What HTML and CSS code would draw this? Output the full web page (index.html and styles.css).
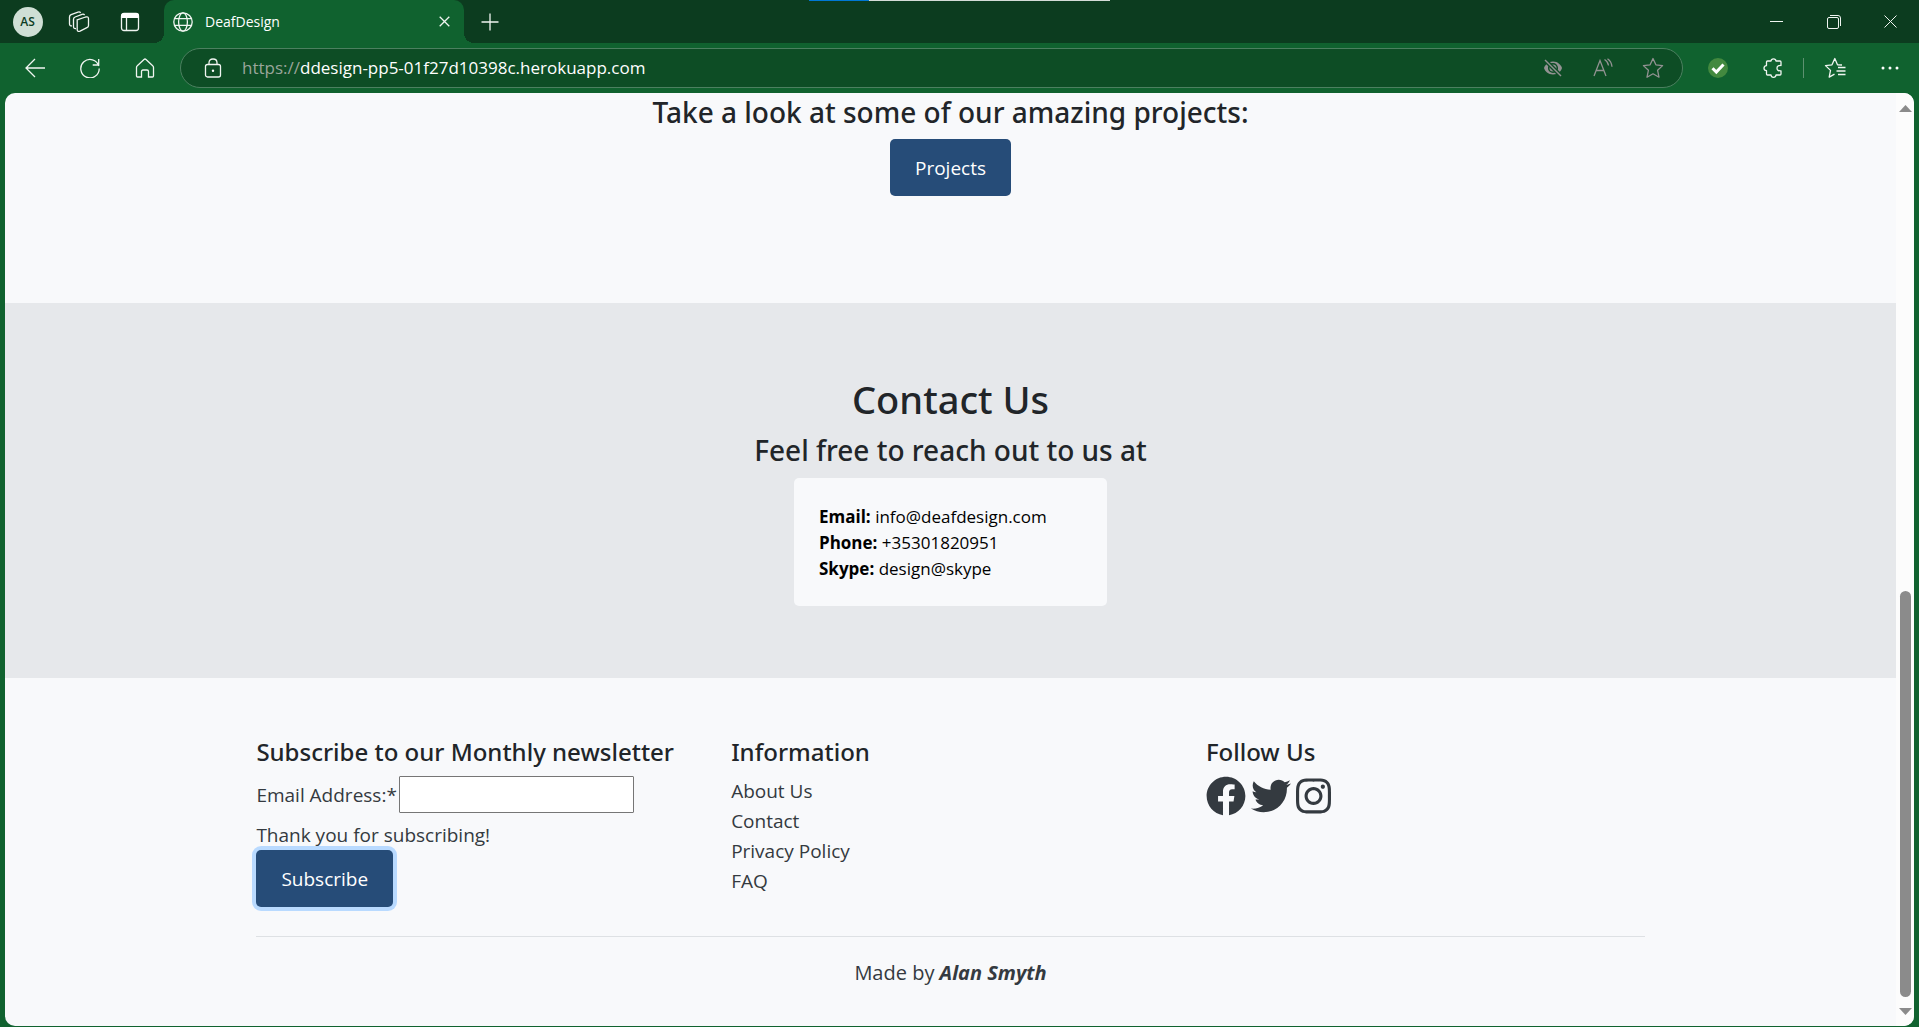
FILE: index.html
```html
<!DOCTYPE html>
<html lang="en">
<head>
<meta charset="utf-8">
<meta name="viewport" content="width=device-width, initial-scale=1">
<title>DeafDesign</title>
<link rel="stylesheet" href="styles.css">
</head>
<body>
<header class="browser">
  <div class="titlebar">
    <button class="tool" type="button" aria-label="Profile"><span class="avatar">AS</span></button>
    <button class="tool" type="button" aria-label="Workspaces">
      <svg class="icon" width="22" height="22" viewBox="0 0 22 22"><path d="M9.2 8.8 17.6 6q2.9-.8 2.9 1.8v6.600q0 1.600-1.600 2.200l-6.800 3.500q-2.900 1.100-2.900-1.500z"/><path d="M8 17.500q-2.500.4-2.500-2V8.300q0-1.700 1.600-2.300L14 3.300q1.800-.6 2.600.8"/><path d="M4 14.800Q1.500 15 1.500 12.800V6q0-1.700 1.600-2.300L10 1.100q1.800-.6 2.600.8"/></svg>
    </button>
    <button class="tool" type="button" aria-label="Tab actions">
      <svg class="icon" width="20" height="20" viewBox="0 0 20 20"><rect x="1.500" y="1.500" width="17" height="17" rx="2.500"/><path class="solid" d="M1 6V4q0-3 3-3h12q3 0 3 3v2z"/><path d="M6.500 6v12"/></svg>
    </button>
    <div class="tab">
      <svg class="icon" width="20" height="20" viewBox="0 0 20 20"><circle cx="10" cy="10" r="9.200"/><ellipse cx="10" cy="10" rx="4.400" ry="9.200"/><path d="M1.500 6.700h17M1.500 13.300h17"/></svg>
      <span class="tab-title">DeafDesign</span>
      <button class="bare" type="button" aria-label="Close tab"><svg class="icon" width="11" height="11" viewBox="0 0 11 11"><path d="m.7.7 9.600 9.600M10.300.7.7 10.300"/></svg></button>
    </div>
    <button class="tool" type="button" aria-label="New tab"><svg class="icon" width="18" height="18" viewBox="0 0 18 18"><path d="M9 .5v17M.5 9h17"/></svg></button>
    <div class="window-controls">
      <button type="button" aria-label="Minimize"><svg class="icon thin" width="13" height="13" viewBox="0 0 13 13"><path d="M0 6.500h13"/></svg></button>
      <button type="button" aria-label="Restore"><svg class="icon thin" width="14" height="14" viewBox="0 0 14 14"><rect x=".5" y="2.500" width="11" height="11" rx="1.500"/><path d="M3 .5h8q2.500 0 2.500 2.500v8"/></svg></button>
      <button type="button" aria-label="Close"><svg class="icon thin" width="13" height="13" viewBox="0 0 13 13"><path d="m.5.5 12 12M12.500.5l-12 12"/></svg></button>
    </div>
    <div class="progress"></div>
  </div>
  <div class="toolbar">
    <button class="nav" type="button" aria-label="Back"><svg class="icon" width="20" height="20" viewBox="0 0 20 20"><path d="M20 10H1M10 1 1 10l9 9"/></svg></button>
    <button class="nav" type="button" aria-label="Refresh"><svg class="icon" width="20" height="20" viewBox="0 0 20 20"><path d="M18.800 8A9.200 9.200 0 1 0 19.200 10.500M18.700 1v6h-6"/></svg></button>
    <button class="nav" type="button" aria-label="Home"><svg class="icon" width="20" height="20" viewBox="0 0 20 20"><path d="M1.500 9.500q0-1 .8-1.700L9 1.500q1-.9 2 0l6.700 6.300q.8.700.8 1.700V18q0 1-1 1h-4v-5.500q0-1.500-1.500-1.500h-4q-1.500 0-1.500 1.500V19h-4q-1 0-1-1z"/></svg></button>
    <div class="address">
      <svg class="icon" width="18" height="20" viewBox="0 0 18 20"><rect x="1.500" y="6.500" width="15" height="12.500" rx="2"/><path d="M5 6.500V4.800Q5 1 9 1t4 3.800v1.700"/><circle class="solid" cx="9" cy="12.800" r="1.200"/></svg>
      <label class="scheme" for="url">https://</label>
      <input id="url" type="text" value="ddesign-pp5-01f27d10398c.herokuapp.com">
      <button type="button" aria-label="Tracking prevention"><svg width="20" height="20" viewBox="0 0 20 20"><path fill="#929292" d="M10 3.500c5 0 8 3.500 9 6.500-1 3.500-4 6.500-9 6.500S2 13.500 1 10c1-3 4-6.500 9-6.500z"/><circle cx="10" cy="10" r="4.300" fill="none" stroke="#0d4d25" stroke-width="1.500"/><path stroke="#0d4d25" stroke-width="4" d="m2 2 16 16"/><path stroke="#929292" stroke-width="1.500" d="m2 2 16 16"/></svg></button>
      <button type="button" aria-label="Read aloud"><svg class="icon dim" width="20" height="20" viewBox="0 0 20 20"><path d="M1 18 7 2.500 13 18M3 12.500h8M11.500 1.500q3.500 2 4 6M14.500.8q4 2.600 4.500 8"/></svg></button>
      <button type="button" aria-label="Add to favorites"><svg class="icon dim" width="22" height="22" viewBox="0 0 22 22"><path stroke-linejoin="round" d="m11 1.500 2.900 6.300 6.700.8-5 4.700 1.400 6.900-6-3.400-6 3.400 1.400-6.900-5-4.700 6.700-.8z"/></svg></button>
    </div>
    <button class="nav" type="button" aria-label="Extension"><svg width="20" height="20" viewBox="0 0 20 20"><circle cx="10" cy="10" r="10" fill="#43893f"/><path fill="none" stroke="#fff" stroke-width="3" d="m4.500 10.300 3.800 3.800 7.200-7.700"/></svg></button>
    <button class="nav" type="button" aria-label="Extensions"><svg class="icon" width="20" height="20" viewBox="0 0 20 20"><path stroke-linejoin="round" d="M4.500 3H8Q8.200.8 10.500.8T13 3h4q1 0 1 1v3.500q-4-.3-4 2.700t4 2.700V16q0 1-1 1h-4q-.2 2.300-2.500 2.300T8 17H4.500q-1 0-1-1v-3.300Q1 12.500 1 10.200t2.500-2.600V4q0-1 1-1z"/></svg></button>
    <span class="divider"></span>
    <button class="nav" type="button" aria-label="Favorites"><svg class="icon" width="22" height="22" viewBox="0 0 22 22"><path stroke-linejoin="round" d="M18 8 13.500 7.800 10.800 1.500 8 7.800 1.500 8.600l5 4.800-1.300 6.700 5.300-3M14 10.500h7.500M12.500 14h9M14 17.500h7.500"/></svg></button>
    <button class="nav" type="button" aria-label="More"><svg width="18" height="4" viewBox="0 0 18 4" fill="#fff"><circle cx="2" cy="2" r="1.500"/><circle cx="9" cy="2" r="1.500"/><circle cx="16" cy="2" r="1.500"/></svg></button>
  </div>
</header>

<div class="viewport">
  <div class="page">
    <section class="projects">
      <h3>Take a look at some of our amazing projects:</h3>
      <button class="btn" type="button">Projects</button>
    </section>
    <section class="contact">
      <h1>Contact Us</h1>
      <h3>Feel free to reach out to us at</h3>
      <address class="card">
        <div><strong>Email:</strong> info@deafdesign.com</div>
        <div><strong>Phone:</strong> +35301820951</div>
        <div><strong>Skype:</strong> design@skype</div>
      </address>
    </section>
    <footer class="footer">
      <div class="columns">
        <form>
          <h4>Subscribe to our Monthly newsletter</h4>
          <div class="field"><label for="email">Email Address:*</label><input id="email" type="email"></div>
          <p>Thank you for subscribing!</p>
          <button class="btn focused" type="button">Subscribe</button>
        </form>
        <nav>
          <h4>Information</h4>
          <ul>
            <li><a href="#about">About Us</a></li>
            <li><a href="#contact">Contact</a></li>
            <li><a href="#privacy">Privacy Policy</a></li>
            <li><a href="#faq">FAQ</a></li>
          </ul>
        </nav>
        <div>
          <h4>Follow Us</h4>
          <div class="social">
            <a href="#facebook" aria-label="Facebook"><svg width="40" height="40" viewBox="0 0 512 512"><path d="M504 256C504 119 393 8 256 8S8 119 8 256c0 123.780 90.690 226.380 209.250 245V327.690h-63V256h63v-54.640c0-62.150 37-96.480 93.670-96.480 27.140 0 55.520 4.840 55.520 4.840v61h-31.280c-30.800 0-40.410 19.120-40.410 38.730V256h68.780l-11 71.690h-57.780V501C413.310 482.380 504 379.780 504 256z"/></svg></a>
            <a href="#twitter" aria-label="Twitter"><svg width="40" height="40" viewBox="0 0 512 512"><path d="M459.370 151.716c.325 4.548.325 9.097.325 13.645 0 138.720-105.583 298.558-298.558 298.558-59.452 0-114.680-17.219-161.137-47.106 8.447.974 16.568 1.299 25.340 1.299 49.055 0 94.213-16.568 130.274-44.832-46.132-.975-84.792-31.188-98.112-72.772 6.498.974 12.995 1.624 19.818 1.624 9.421 0 18.843-1.300 27.614-3.573-48.081-9.747-84.143-51.980-84.143-102.985v-1.299c13.969 7.797 30.214 12.670 47.431 13.319-28.264-18.843-46.781-51.005-46.781-87.391 0-19.492 5.197-37.360 14.294-52.954 51.655 63.675 129.300 105.258 216.365 109.807-1.624-7.797-2.599-15.918-2.599-24.040 0-57.828 46.782-104.934 104.934-104.934 30.213 0 57.502 12.670 76.670 33.137 23.715-4.548 46.456-13.320 66.599-25.340-7.798 24.366-24.366 44.833-46.132 57.827 21.117-2.273 41.584-8.122 60.426-16.243-14.292 20.791-32.161 39.308-52.628 54.253z"/></svg></a>
            <a href="#instagram" aria-label="Instagram"><svg width="35" height="40" viewBox="0 0 448 512"><path d="M224.100 141c-63.600 0-114.900 51.300-114.900 114.900s51.300 114.900 114.900 114.900S339 319.500 339 255.900 287.700 141 224.100 141zm0 189.600c-41.100 0-74.700-33.500-74.700-74.700s33.500-74.700 74.700-74.700 74.700 33.500 74.700 74.700-33.600 74.700-74.700 74.700zm146.400-194.300c0 14.900-12 26.800-26.800 26.800-14.900 0-26.800-12-26.800-26.800s12-26.800 26.800-26.800 26.800 12 26.800 26.800zm76.100 27.200c-1.700-35.900-9.900-67.700-36.200-93.900-26.200-26.200-58-34.400-93.900-36.200-37-2.100-147.900-2.100-184.900 0-35.800 1.700-67.600 9.900-93.900 36.100s-34.400 58-36.200 93.900c-2.100 37-2.100 147.900 0 184.900 1.700 35.900 9.900 67.700 36.200 93.900s58 34.400 93.900 36.200c37 2.100 147.900 2.100 184.900 0 35.900-1.700 67.700-9.900 93.900-36.200 26.200-26.200 34.400-58 36.200-93.900 2.100-37 2.100-147.800 0-184.800zM398.800 388c-7.800 19.600-22.900 34.700-42.600 42.600-29.500 11.700-99.500 9-132.100 9s-102.700 2.600-132.100-9c-19.600-7.800-34.700-22.900-42.600-42.600-11.700-29.500-9-99.500-9-132.100s-2.600-102.700 9-132.100c7.800-19.600 22.900-34.700 42.600-42.600 29.500-11.700 99.500-9 132.100-9s102.700-2.600 132.100 9c19.600 7.800 34.700 22.900 42.600 42.600 11.700 29.500 9 99.500 9 132.100s2.700 102.700-9 132.100z"/></svg></a>
          </div>
        </div>
      </div>
      <div class="credit">Made by <strong><em>Alan Smyth</em></strong></div>
    </footer>
  </div>
  <div class="scrollbar" aria-hidden="true">
    <svg width="13" height="7" viewBox="0 0 13 7"><path fill="#8b8b8b" d="M6.500 0 13 7H0z"/></svg>
    <span class="track"></span>
    <span class="thumb"></span>
    <svg width="13" height="7" viewBox="0 0 13 7"><path fill="#8b8b8b" d="M6.500 7 13 0H0z"/></svg>
  </div>
</div>
</body>
</html>
```
FILE: styles.css
```css
* { box-sizing: border-box; }

body {
  margin: 0;
  min-height: 100vh;
  display: flex;
  flex-direction: column;
  background: #10622f;
  color: #343a40;
  font: 400 19px/30px "Open Sans", "Noto Sans", sans-serif;
}

h1, h3, h4, p, ul { margin: 0; }
h1, h3, h4 { color: #212529; font-family: "Noto Sans", "Open Sans", sans-serif; font-weight: 500; }
h1 { font-size: 38px; line-height: 48px; }
h3 { font-size: 28px; line-height: 34px; }
h4 { font-size: 24px; line-height: 28px; margin-bottom: 10px; }
button, input { font: inherit; }
svg { display: block; }

/* Browser chrome */
.browser { color: #fff; }
.browser button {
  display: flex;
  align-items: center;
  justify-content: center;
  flex: none;
  padding: 0;
  border: 0;
  background: none;
  color: inherit;
}
.icon { fill: none; stroke: #f0f5f1; stroke-width: 1.3; flex: none; }
.icon.thin { stroke-width: 1; }
.icon.dim { stroke: #929292; }
.icon .solid { fill: #fff; stroke: none; }

.titlebar {
  position: relative;
  display: flex;
  height: 43px;
  padding-left: 2px;
  background: #0c3c1f;
}
.browser .tool { width: 51px; }
.avatar {
  width: 30px;
  height: 30px;
  border-radius: 50%;
  background: #cfdfd5;
  color: #0c3c1f;
  font-size: 12px;
  font-weight: 600;
  line-height: 30px;
}
.tab {
  position: relative;
  display: flex;
  align-items: center;
  gap: 12px;
  width: 300px;
  margin-left: 9px;
  padding: 0 14px 0 9px;
  border-radius: 10px 10px 0 0;
  background: #10622f;
  font-size: 14px;
}
.tab::before, .tab::after {
  content: "";
  position: absolute;
  bottom: 0;
  width: 10px;
  height: 10px;
}
.tab::before { left: -10px; background: radial-gradient(circle at 0 0, #0c3c1f 10px, #10622f 10px); }
.tab::after { right: -10px; background: radial-gradient(circle at 100% 0, #0c3c1f 10px, #10622f 10px); }
.tab-title { flex: 1; }
.window-controls { display: flex; margin-left: auto; }
.browser .window-controls button { width: 57px; }
.progress {
  position: absolute;
  top: 0;
  left: 50%;
  width: 301px;
  height: 1px;
  margin-left: -151px;
  background: linear-gradient(90deg, #0078d4 60px, #d5dcd7 60px);
}

.toolbar {
  display: flex;
  align-items: center;
  height: 50px;
  padding: 0 2px 0 7px;
}
.browser .nav { width: 55px; height: 40px; }
.address {
  display: flex;
  align-items: center;
  flex: 1;
  height: 40px;
  margin: 0 7px 0 8px;
  padding: 0 4px 0 23px;
  border: 1px solid #4c8060;
  border-radius: 20px;
  background: #0d4d25;
  font-size: 17px;
}
.scheme { margin-left: 20px; color: #9aa59b; }
.address input {
  flex: 1;
  min-width: 0;
  padding: 0;
  border: 0;
  outline: 0;
  background: none;
  color: #fff;
}
.address button { width: 50px; }
.divider { width: 1px; height: 20px; margin: 0 3px; background: #5d9170; }

/* Page area */
.viewport {
  display: flex;
  flex: 1;
  margin: 0 5px 1px;
  border-radius: 10px;
  overflow: hidden;
  background: #f8f9fb;
}
.page { flex: 1; min-width: 0; }
.projects, .contact {
  display: flex;
  flex-direction: column;
  align-items: center;
}
.projects { gap: 10px; padding: 2px 0 107px; }
.btn {
  height: 57px;
  padding: 0 25px;
  border: 0;
  border-radius: 5px;
  background: #264c78;
  color: #fff;
}
.focused { box-shadow: 0 0 0 4px #b9daff; }

.contact { padding: 72px 0; background: #e6e8eb; }
.contact h1 { margin-bottom: 10px; }
.card {
  width: 313px;
  margin-top: 11px;
  padding: 26px 25px 24px;
  border-radius: 5px;
  background: #f8f9fb;
  color: #000;
  font-size: 17px;
  font-style: normal;
  line-height: 26px;
}

.footer { width: 75%; margin: 0 auto; padding: 60px 15px 37px; }
.columns {
  display: grid;
  grid-template-columns: repeat(3, 1fr);
  gap: 36px;
  padding-bottom: 29px;
  border-bottom: 1px solid #dee1e4;
}
.columns > * { min-width: 0; }
.columns p { line-height: 29px; }
.field { display: flex; align-items: center; gap: 2px; margin-bottom: 8px; }
.field input {
  width: 235px;
  height: 37px;
  border: 1px solid #767676;
  border-radius: 1px;
  background: #fff;
}
.columns ul { padding: 0; list-style: none; }
.columns a { color: inherit; text-decoration: none; }
.social { display: flex; gap: 5px; fill: #343a40; }
.credit { padding-top: 21px; font-size: 20px; text-align: center; }

/* Scroll bar */
.scrollbar {
  display: flex;
  flex-direction: column;
  align-items: center;
  width: 18px;
  padding: 12px 0 11px;
  background: #fcfcfc;
}
.track { flex: 478; }
.thumb {
  flex: 406;
  width: 11px;
  margin-bottom: 11px;
  border-radius: 6px;
  background: #8b8b8b;
}
```
